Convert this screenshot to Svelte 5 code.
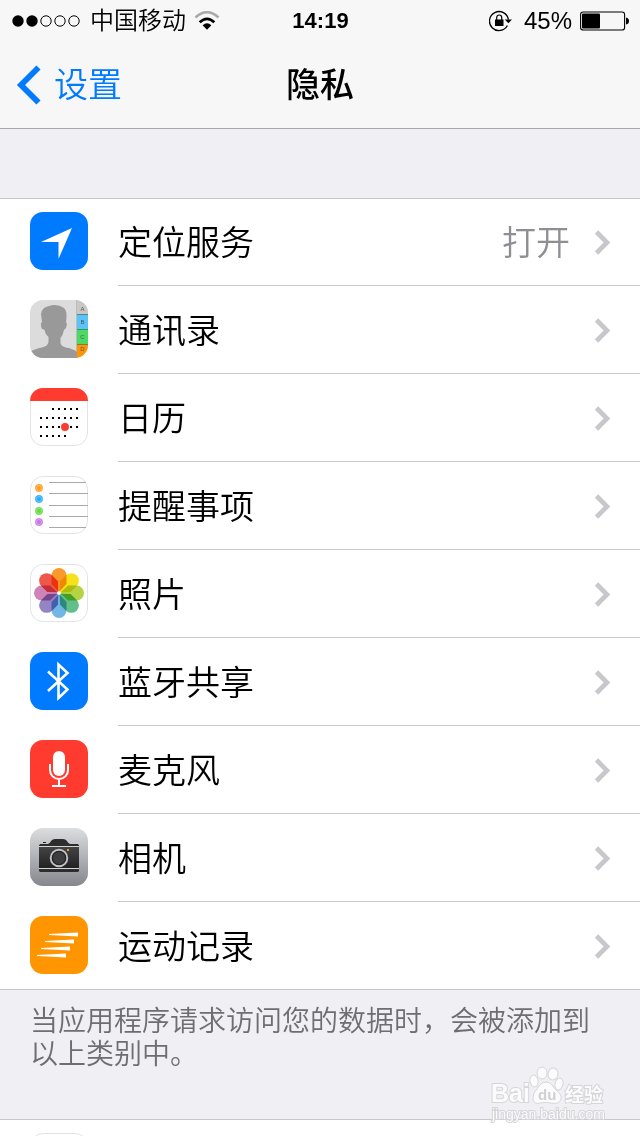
<script>
  const rows = [
    { icon: 'location', label: '定位服务', value: '打开' },
    { icon: 'contacts', label: '通讯录' },
    { icon: 'calendar', label: '日历' },
    { icon: 'reminders', label: '提醒事项' },
    { icon: 'photos', label: '照片' },
    { icon: 'bluetooth', label: '蓝牙共享' },
    { icon: 'microphone', label: '麦克风' },
    { icon: 'camera', label: '相机' },
    { icon: 'motion', label: '运动记录' }
  ];

  const signal = [true, true, false, false, false];

  // Calendar dots: y, first x, count
  const dotRows = [
    [20, 22, 5],
    [29, 10, 7],
    [38, 10, 7],
    [47, 10, 5]
  ];
  const dots = dotRows.flatMap(([y, x, n]) => Array.from({ length: n }, (_, i) => [x + i * 6, y]));

  const reminders = [
    ['#ff9d1e', 12],
    ['#27aef8', 23],
    ['#62dc45', 35],
    ['#cb77e3', 46]
  ];
  const ruled = [6, 17, 29, 40, 51];

  const petals = ['#f99a2b', '#f5e11c', '#b5d443', '#62bf8c', '#72b6e3', '#9384c4', '#cf84b8', '#f1564b'];

  const toes = [
    [46, 23, 4, 6, -12],
    [54, 15, 5, 6, 0],
    [65, 16, 5, 6, 8],
    [71, 26, 4, 6, 14]
  ];
</script>

<div class="screen">
  <header>
    <div class="status">
      <div class="carrier">
        <svg width="70" height="14" viewBox="0 0 70 14" aria-hidden="true">
          {#each signal as on, i}
            <circle cx={6 + i * 14} cy="7" r={on ? 5.7 : 5.2} fill={on ? '#000' : 'none'} stroke="#000" stroke-width={on ? 0 : 1} />
          {/each}
        </svg>
        <span>中国移动</span>
        <svg width="26" height="20" viewBox="0 0 26 20" aria-hidden="true">
          <path d="M1.5 6.5Q13-4 24.500 6.500" fill="none" stroke="#aaa" stroke-width="2.600" />
          <path d="M5.700 11.200Q13 4.500 20.300 11.200" fill="none" stroke="#000" stroke-width="2.800" />
          <path d="M8.600 14.300Q13 10.300 17.400 14.300L13 18.800Z" />
        </svg>
      </div>
      <time>14:19</time>
      <div class="power">
        <svg width="24" height="22" viewBox="0 0 24 22" aria-hidden="true">
          <path d="M18.400 15.500A9.500 9.500 0 1 1 19.400 9.700" fill="none" stroke="#000" stroke-width="1.300" />
          <path d="M15.800 9.500H23L19.400 13.300Z" />
          <rect x="6" y="9.500" width="8.500" height="6.500" />
          <path d="M7.700 10V7.500a2.500 2.500 0 0 1 5 0V10" fill="none" stroke="#000" stroke-width="1.200" />
        </svg>
        <span>45%</span>
        <svg width="49" height="20" viewBox="0 0 49 20" aria-hidden="true">
          <rect x=".6" y="1" width="44" height="18" rx="2.600" fill="none" stroke="#000" stroke-width="1.100" />
          <rect x="2" y="2.500" width="18" height="15" rx="1" />
          <path d="M46 6.500Q49 7 49 10T46 13.500Z" />
        </svg>
      </div>
    </div>
    <nav>
      <button class="back" type="button">
        <svg width="26" height="42" viewBox="0 0 26 42" aria-hidden="true">
          <path d="M22.500 3.500 5 21 22.500 38.500" fill="none" stroke="#007aff" stroke-width="5.800" />
        </svg>
        <span>设置</span>
      </button>
      <h1>隐私</h1>
    </nav>
  </header>

  <main>
    <ul>
      {#each rows as row}
        <li>
          <a href="#{row.icon}">
            <svg class="icon" width="58" height="58" viewBox="0 0 58 58" aria-hidden="true">
              {#if row.icon === 'location'}
                <rect width="58" height="58" rx="13" fill="#007aff" />
                <path d="M42 16 28.500 47V30H11Z" fill="#fff" />
              {:else if row.icon === 'contacts'}
                <clipPath id="round"><rect width="58" height="58" rx="13" /></clipPath>
                <g clip-path="url(#round)">
                  <rect width="58" height="58" fill="#dcdcdc" />
                  <path d="M0 58V52Q4 49 12 47.500Q18 46 18.500 42V37Q15 34 14.500 30L11.500 28.500 10.800 23.500 12 22 11 14Q12 7 19 6 27 3 34 8 37 11 36.500 17L36 22 37 24 36 28 34 30Q33 35 30.500 38V43Q31 46 36 47.500 44 49 47 52V58Z" fill="#999" />
                  <rect x="46.500" width="1" height="58" fill="#9b9b97" />
                  <rect x="47" width="11" height="14" fill="#c9c8c3" />
                  <rect x="47" y="14" width="11" height="15" fill="#5ac3fa" />
                  <rect x="47" y="29" width="11" height="15" fill="#4cd964" />
                  <rect x="47" y="44" width="11" height="14" fill="#ff9500" />
                  <path d="M47 14.500h11M47 29.500h11M47 44.500h11" stroke="#48705f" stroke-opacity=".7" />
                  <g class="tabs">
                    <text x="52.500" y="11">A</text>
                    <text x="52.500" y="24">B</text>
                    <text x="52.500" y="39">C</text>
                    <text x="52.500" y="51">D</text>
                  </g>
                </g>
              {:else if row.icon === 'calendar'}
                <rect x=".5" y=".5" width="57" height="57" rx="12.500" fill="#fff" stroke="#e3e3e3" />
                <path d="M0 13A13 13 0 0 1 13 0H45A13 13 0 0 1 58 13Z" fill="#ff3b30" />
                {#each dots as [x, y]}
                  <rect {x} {y} width="2" height="2" />
                {/each}
                <circle cx="35" cy="39" r="4" fill="#ff3b30" />
              {:else if row.icon === 'reminders'}
                <rect x=".5" y=".5" width="57" height="57" rx="12.500" fill="#fff" stroke="#e3e3e3" />
                {#each reminders as [color, y]}
                  <circle cx="9" cy={y} r="3.700" fill={color} stroke={color} stroke-opacity=".6" stroke-width=".8" />
                  <circle cx="9" cy={y} r="2.600" fill="none" stroke="#fff" stroke-opacity=".4" stroke-width=".7" />
                {/each}
                {#each ruled as y, i}
                  <path d="M19 {y}.500H{i === 0 || i === 4 ? 56 : 58}" stroke="#a9a9a9" />
                {/each}
              {:else if row.icon === 'photos'}
                <rect x=".5" y=".5" width="57" height="57" rx="12.500" fill="#fff" stroke="#e3e3e3" />
                <g class="petals">
                  {#each petals as color, i}
                    <path d="M29 28 21.500 20V11.500a7.500 7.500 0 0 1 15 0V20Z" fill={color} transform="rotate({i * 45} 29 29)" />
                  {/each}
                </g>
                <circle cx="29" cy="29" r="1.800" fill="#fff" />
              {:else if row.icon === 'bluetooth'}
                <rect width="58" height="58" rx="13" fill="#007aff" />
                <path d="M18 19.500 37.500 37.500 28.500 46V12.500L37.500 21 18 39" fill="none" stroke="#fff" stroke-width="2.600" />
              {:else if row.icon === 'microphone'}
                <rect width="58" height="58" rx="13" fill="#ff3b30" />
                <rect x="23" y="11" width="12" height="25" rx="6" fill="#fff" />
                <path d="M20 24v6a9 9 0 0 0 18 0v-6M29 39v7M22 46h14" fill="none" stroke="#fff" stroke-width="2" />
              {:else if row.icon === 'camera'}
                <linearGradient id="metal" x2="0" y2="1">
                  <stop stop-color="#dcdddf" />
                  <stop offset="1" stop-color="#85878d" />
                </linearGradient>
                <linearGradient id="body" x2="0" y2="1">
                  <stop stop-color="#444" />
                  <stop offset="1" stop-color="#222" />
                </linearGradient>
                <rect width="58" height="58" rx="13" fill="url(#metal)" />
                <path d="M9 17.500 10 16H18Q20 15 21.500 12.500 22.500 11 25 11H33Q35.500 11 36.500 12.500 38 15 40 16H48L49 17.500V43L48 44H10L9 43Z" fill="#2d2d2d" />
                <rect x="9" y="19" width="40" height="21" fill="url(#body)" />
                <path d="M9 18.500h40M9 40.500h40" stroke="#d5d5d5" />
                <path d="M13 14.500h3" stroke="#222" />
                <circle cx="29" cy="30" r="8.300" fill="#333" stroke="#bfc0c3" stroke-width="1.900" />
                <circle cx="29" cy="30" r="6.500" fill="#3d3d3d" stroke="#202020" />
                <rect x="37" y="21" width="2" height="2" fill="#d5a51d" />
              {:else}
                <rect width="58" height="58" rx="13" fill="#ff9500" />
                <path d="M19 18 48 16.500V20.500L19 19ZM15 25 44 23.500V27.500L15 26ZM11 32 40 30.500V34.500L11 33ZM7 39 36 37.500V41.500L7 40Z" fill="#fff" />
              {/if}
            </svg>
            <span class="cell">
              <span class="label">{row.label}</span>
              {#if row.value}<span class="value">{row.value}</span>{/if}
              <svg width="18" height="28" viewBox="0 0 18 28" aria-hidden="true">
                <path d="M2.500 3 13 13.500 2.500 24" fill="none" stroke="#c7c7cc" stroke-width="4.600" />
              </svg>
            </span>
          </a>
        </li>
      {/each}
    </ul>
    <p>当应用程序请求访问您的数据时，会被添加到以上类别中。</p>
    <ul>
      <li>
        <a href="#more" aria-hidden="true">
          <svg class="icon" width="58" height="58" viewBox="0 0 58 58">
            <rect x=".5" y=".5" width="57" height="57" rx="12.500" fill="#fff" stroke="#e3e3e3" />
          </svg>
        </a>
      </li>
    </ul>
  </main>

  <svg class="mark" width="120" height="60" viewBox="0 0 120 60" aria-hidden="true">
    <g fill="#fbfbfc" stroke="#d6d6da" stroke-width="1">
      {#each toes as [x, y, rx, ry, turn]}
        <ellipse cx={x} cy={y} {rx} {ry} transform="rotate({turn} {x} {y})" />
      {/each}
      <path d="M58 24Q63 24 67 31 74 36 73 41 71 47 63 45 58 44 52 45 46 47 45 41 44 36 49 31 53 24 58 24Z" />
      <g paint-order="stroke" stroke-width="2">
        <text class="bai" x="3" y="44">Bai</text>
        <text class="exp" x="77" y="44">经验</text>
        <text class="site" x="4" y="61">jingyan.baidu.com</text>
      </g>
    </g>
    <text class="du" x="50" y="42">du</text>
  </svg>
</div>

<style>
  :global(body) {
    margin: 0;
  }
  .screen {
    position: relative;
    height: 100vh;
    overflow: hidden;
    background: #efeff4;
    color: #000;
    font-family: 'Liberation Sans', 'Noto Sans CJK SC', sans-serif;
    font-weight: 350;
  }
  header {
    background: #f7f7f7;
    border-bottom: 1px solid #a7a7ac;
  }
  .status {
    display: grid;
    grid-template-columns: 1fr auto 1fr;
    align-items: center;
    height: 42px;
    padding: 0 11px 0 12px;
    font-size: 24px;
    line-height: 42px;
  }
  .carrier,
  .power {
    display: flex;
    align-items: center;
    gap: 8px;
  }
  .power span {
    margin-left: 3px;
  }
  .power {
    justify-content: flex-end;
  }
  time {
    font-size: 22px;
    font-weight: 700;
  }
  nav {
    display: grid;
    grid-template-columns: 1fr auto 1fr;
    align-items: center;
    height: 86px;
    padding: 0 16px;
  }
  .back {
    display: flex;
    align-items: center;
    gap: 12px;
    padding: 0;
    border: 0;
    background: none;
    color: #007aff;
    font: inherit;
    font-size: 34px;
    line-height: 48px;
  }
  h1 {
    margin: 0;
    font-size: 34px;
    font-weight: 500;
    line-height: 48px;
  }
  main {
    padding-top: 69px;
  }
  ul {
    margin: 0;
    padding: 0;
    list-style: none;
    background: #fff;
    box-shadow: inset 0 1px #c8c7cc, inset 0 -1px #c8c7cc;
  }
  a {
    display: flex;
    gap: 30px;
    height: 88px;
    padding-left: 30px;
    color: inherit;
    text-decoration: none;
  }
  .icon {
    flex: none;
    margin-top: 14px;
  }
  .cell {
    display: flex;
    flex: 1;
    align-items: center;
    box-sizing: border-box;
    gap: 24px;
    padding: 2px 28px 0 0;
    border-bottom: 1px solid #c8c7cc;
    font-size: 34px;
    line-height: 48px;
  }
  .label {
    flex: 1;
  }
  .value {
    color: #8e8e93;
  }
  p {
    margin: 0;
    padding: 15px 30px 48px;
    color: #6d6d72;
    font-size: 28px;
    line-height: 33px;
  }
  .tabs {
    fill: #555;
    font-size: 6px;
    text-anchor: middle;
  }
  .petals path {
    mix-blend-mode: multiply;
  }
  .petals {
    isolation: isolate;
  }
  .mark {
    position: absolute;
    right: 32px;
    bottom: 18px;
    overflow: visible;
  }
  .bai {
    font-size: 25px;
    font-weight: 700;
  }
  .exp {
    font-size: 19px;
    font-weight: 700;
  }
  .site {
    font-size: 14px;
  }
  .du {
    fill: #d0d0d4;
    font-size: 15px;
    font-weight: 700;
  }
</style>
